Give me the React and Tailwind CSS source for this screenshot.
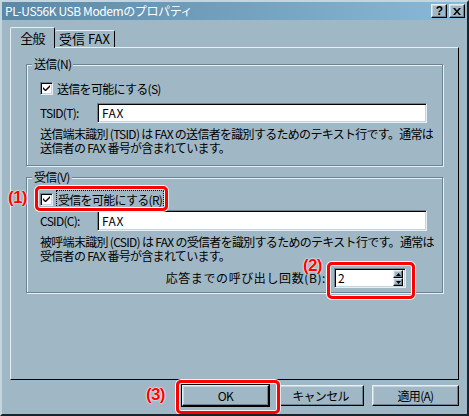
import React from 'react';

const raised = "border border-t-[#e6eff4] border-l-[#e6eff4] border-r-[#000] border-b-[#000] shadow-[inset_-1px_-1px_0_#6d8391,inset_1px_1px_0_#c4d5de]";
const sunken = "border border-t-[#6d8391] border-l-[#6d8391] border-r-[#e6eff4] border-b-[#e6eff4] shadow-[inset_1px_1px_0_#000,inset_-1px_-1px_0_#c4d5de]";
const etched = "border border-[#6d8391] shadow-[1px_1px_0_#e6eff4,inset_1px_1px_0_#e6eff4]";

const Check = () => (
  <div className={`w-[13px] h-[13px] bg-white flex items-center justify-center shrink-0 ${sunken}`}>
    <svg width="7" height="7" viewBox="0 0 7 7">
      <path d="M0 2 L0 4 L2 6 L3 6 L7 2 L7 0 L2.5 4.5 Z" fill="#000" />
    </svg>
  </div>
);

const Group = ({ label, className, children }) => (
  <div className={`relative ${etched} ${className}`}>
    <span className="absolute -top-[8px] left-[5px] px-[2px] bg-[#a0b8c6] leading-[14px]">{label}</span>
    {children}
  </div>
);

const Mark = ({ children, className }) => (
  <span className={`absolute font-bold text-[17px] leading-[18px] text-[#ff0000] [font-family:'Liberation_Sans',Arial,sans-serif] [text-shadow:0_0_1px_#fff,0_0_1px_#fff,0_0_2px_#fff] ${className}`}>
    {children}
  </span>
);

const Box = ({ className }) => (
  <div className={`absolute border-[3px] border-[#ff0000] rounded-[5px] shadow-[0_0_0_1px_#f4f4f4,inset_0_0_0_1px_#f4f4f4] ${className}`} />
);

const Btn = ({ children, def }) => (
  <button className={`w-[87px] h-[21px] flex items-center justify-center bg-[#a0b8c6] ${def ? "outline outline-1 outline-black " : ""}${raised}`}>
    {children}
  </button>
);

export default function App() {
  return (
    <div className="relative w-[469px] h-[416px] overflow-hidden bg-[#a0b8c6] text-[12px] text-black [font-family:'Noto_Sans_CJK_JP','Liberation_Sans',sans-serif] tracking-[-0.7px] border-2 border-t-[#c4d5de] border-l-[#c4d5de] border-r-[#1b2328] border-b-[#1b2328] flex flex-col">
      {/* title bar */}
      <div className="h-[18px] flex items-center justify-between pl-[3px] pr-[2px] bg-gradient-to-r from-[#5b88a5] to-[#8abad9]">
        <span className="text-white text-[12px] leading-[18px] tracking-[-0.4px]">PL-US56K USB Modemのプロパティ</span>
        <div className="flex gap-[2px]">
          <div className={`w-[16px] h-[14px] bg-[#a0b8c6] flex items-center justify-center font-bold text-[12px] leading-none [font-family:'Liberation_Sans',sans-serif] ${raised}`}>?</div>
          <div className={`w-[16px] h-[14px] bg-[#a0b8c6] flex items-center justify-center ${raised}`}>
            <svg width="8" height="7" viewBox="0 0 8 7">
              <path d="M0 0 L2 0 L4 2.5 L6 0 L8 0 L5 3.5 L8 7 L6 7 L4 4.5 L2 7 L0 7 L3 3.5 Z" fill="#000" />
            </svg>
          </div>
        </div>
      </div>

      <div className="px-[8px] flex flex-col">
        {/* tabs */}
        <div className="flex items-end mt-[7px] relative z-10 -mb-[1px]">
          <div className="h-[21px] w-[45px] flex items-center justify-center bg-[#a0b8c6] border-t border-l border-[#e6eff4] border-r border-r-black rounded-t-[2px] text-[13px]">全般</div>
          <div className="h-[17px] w-[60px] flex items-center justify-center border-t border-[#e6eff4] border-r border-r-black rounded-t-[2px] text-[13px] mb-[1px] tracking-[0px]">受信 FAX</div>
        </div>

        {/* panel */}
        <div className="w-[449px] h-[333px] border border-t-[#e6eff4] border-l-[#e6eff4] border-r-black border-b-black pl-[15px] pt-[16px]">
          <Group label="送信(N)" className="w-[417px] h-[102px] pl-[13px] pt-[17px]">
            <div className="flex items-center gap-[4px] h-[13px]">
              <Check />
              <span>送信を可能にする(S)</span>
            </div>
            <div className="flex items-center mt-[8px]">
              <span className="w-[57px]">TSID(T):</span>
              <div className={`w-[330px] h-[20px] bg-white flex items-center pl-[4px] tracking-[0.5px] ${sunken}`}>FAX</div>
            </div>
            <div className="mt-[4px] leading-[14px] whitespace-nowrap">
              <div>送信端末識別 (TSID) は FAX の送信者を識別するためのテキスト行です。通常は</div>
              <div>送信者の FAX 番号が含まれています。</div>
            </div>
          </Group>

          <Group label="受信(V)" className="w-[417px] h-[116px] mt-[11px] pl-[13px] pt-[15px]">
            <div className="flex items-center gap-[4px] h-[13px]">
              <Check />
              <span className="outline outline-1 outline-dotted outline-black px-[1px]">受信を可能にする(R)</span>
            </div>
            <div className="flex items-center mt-[4px]">
              <span className="w-[57px]">CSID(C):</span>
              <div className={`w-[330px] h-[21px] bg-white flex items-center pl-[4px] tracking-[0.5px] ${sunken}`}>FAX</div>
            </div>
            <div className="mt-[4px] leading-[14px] whitespace-nowrap">
              <div>被呼端末識別 (CSID) は FAX の受信者を識別するためのテキスト行です。通常は</div>
              <div>受信者の FAX 番号が含まれています。</div>
            </div>
            <div className="flex items-center justify-end mt-[5px] pr-[36px]">
              <span className="mr-[8px] tracking-[0.6px]">応答までの呼び出し回数(B):</span>
              <div className={`w-[72px] h-[20px] bg-white flex items-center justify-between pl-[3px] pr-[2px] ${sunken}`}>
                <span>2</span>
                <div className="flex flex-col">
                  <div className={`w-[10px] h-[8px] bg-[#a0b8c6] flex items-center justify-center ${raised}`}>
                    <svg width="5" height="3" viewBox="0 0 5 3"><path d="M2.5 0 L5 3 L0 3 Z" fill="#000" /></svg>
                  </div>
                  <div className={`w-[10px] h-[8px] bg-[#a0b8c6] flex items-center justify-center ${raised}`}>
                    <svg width="5" height="3" viewBox="0 0 5 3"><path d="M0 0 L5 0 L2.5 3 Z" fill="#000" /></svg>
                  </div>
                </div>
              </div>
            </div>
          </Group>
        </div>

        {/* buttons */}
        <div className="flex justify-end gap-[8px] mt-[5px]">
          <Btn def>OK</Btn>
          <Btn>キャンセル</Btn>
          <Btn>適用(A)</Btn>
        </div>
      </div>

      {/* annotations */}
      <Box className="left-[33px] top-[184px] w-[133px] h-[25px]" />
      <Mark className="left-[6px] top-[187px]">(1)</Mark>
      <Box className="left-[325px] top-[260px] w-[88px] h-[37px]" />
      <Mark className="left-[301px] top-[255px]">(2)</Mark>
      <Box className="left-[174px] top-[378px] w-[104px] h-[34px]" />
      <Mark className="left-[144px] top-[384px]">(3)</Mark>
    </div>
  );
}
